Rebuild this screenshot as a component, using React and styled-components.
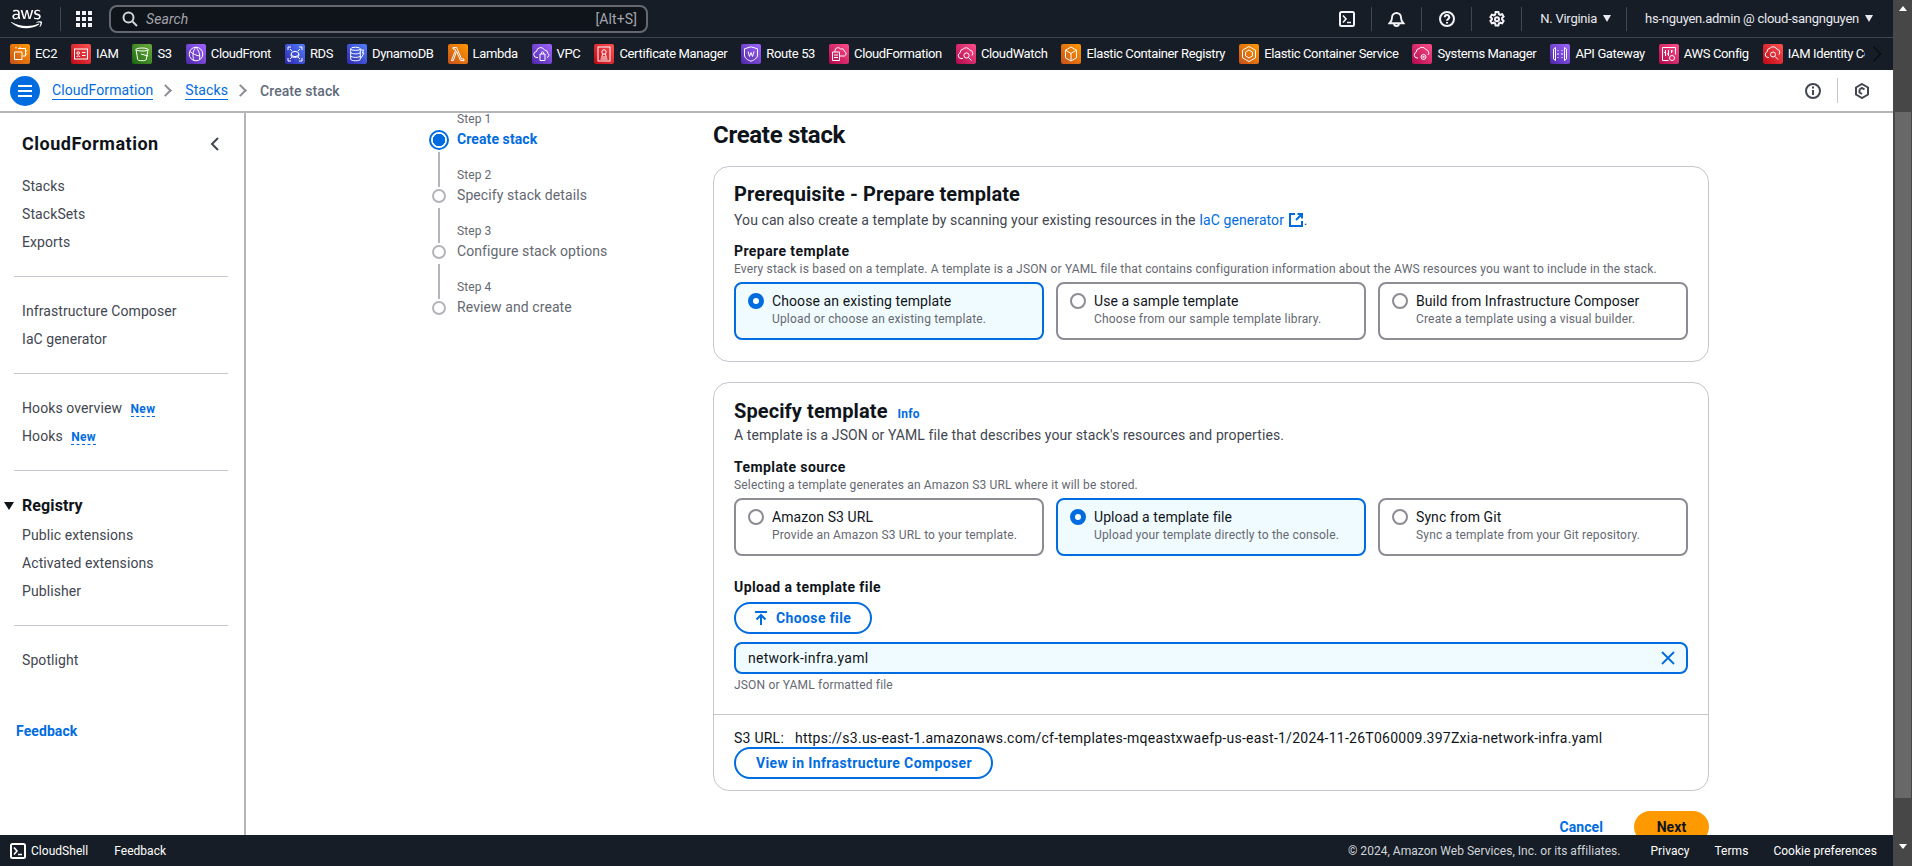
import React from 'react';
import styled, { createGlobalStyle } from 'styled-components';
import { FaAws } from 'react-icons/fa';

const GlobalStyle = createGlobalStyle`
  * { box-sizing: border-box; }
  html, body, #root { margin: 0; padding: 0; height: 100%; overflow: hidden; }
  body {
    font-family: Roboto, "Liberation Sans", Arial, sans-serif;
    font-size: 14px;
    line-height: 20px;
    letter-spacing: 0.09px;
    color: #0f141a;
    background: #fff;
  }
`;

const gradients = {
  orange: 'linear-gradient(45deg, #c8511b, #ff9900)',
  red: 'linear-gradient(45deg, #bd0816, #ff5252)',
  green: 'linear-gradient(45deg, #1b660f, #6cae3e)',
  purple: 'linear-gradient(45deg, #4d27a8, #a166ff)',
  blue: 'linear-gradient(45deg, #2e27ad, #527fff)',
  pink: 'linear-gradient(45deg, #b0084d, #ff4f8b)',
};

const glyphs = {
  ec2: <><path d="M8 4.5h7.5V12H13M4.5 8H12v7.5H4.5z" /><path d="M6 2.8v1.7M10 2.8v1.7M17.2 7h-1.7M17.2 10h-1.7" /></>,
  iam: <><rect x="3.5" y="5" width="13" height="10" /><circle cx="7.2" cy="9" r="1.3" /><path d="M5.5 13c.3-1.5 3.2-1.5 3.5 0M11 8.5h3.5M11 11.5h3.5" /></>,
  s3: <><path d="M4 5.5c0-2 12-2 12 0l-1.7 10c-.4 1.6-8.2 1.6-8.6 0zM4 5.5c0 2 12 2 12 0" /><path d="M9 10l7 2" /></>,
  cloudfront: <><circle cx="10" cy="10" r="6.8" /><path d="M10 3.2C7 6 6 11 8 16.6M10 3.2c2.5 3 4.5 7 3.5 12M4 7.5c3 2.5 6 4 10 4.5" /></>,
  rds: <><ellipse cx="10" cy="10" rx="3.8" ry="2.6" /><path d="M6.2 10v1.8c0 2 7.6 2 7.6 0V10M3 6V3h3M14 3h3v3M17 14v3h-3M6 17H3v-3M5 5l2 2M15 5l-2 2M5 15l2-2M15 15l-2-2" /></>,
  dynamo: <><ellipse cx="8.5" cy="4.8" rx="4.8" ry="1.6" /><path d="M3.7 4.8v10.4c0 2.1 9.6 2.1 9.6 0V4.8M3.7 8.3c0 2.1 9.6 2.1 9.6 0M3.7 11.8c0 2.1 9.6 2.1 9.6 0M14 6h2.6l-1.3 3h1.7l-3 5" /></>,
  lambda: <path d="M5 3.5h3.6l5 11.5h2.4v1.6h-3.4L8.5 7.3 5.3 16.6H3.4l4.2-10.6L6.9 5H5z" />,
  vpc: <><path d="M6 13.5H5a3 3 0 0 1-.5-6 4.2 4.2 0 0 1 8-1.5 3.4 3.4 0 0 1 3.3 3.2 2.4 2.4 0 0 1-.8 4.3" /><path d="M8 10h5v6.5H8zM9.5 10V8.7a1 1 0 0 1 2 0V10" /></>,
  cert: <><rect x="4" y="3" width="12" height="14" /><path d="M6.5 15h7M7 13h6" /><circle cx="10" cy="8" r="2.2" /><path d="M8.8 10l-.8 2.2M11.2 10l.8 2.2" /></>,
  route53: <><path d="M10 2.8l6.5 2v6.2c0 3-3 5-6.5 6.2C6.500 16 3.500 14 3.500 11V4.800z" /><path d="M7 7.500l1.500 5 1.500-4 1.500 4 1.500-5" /></>,
  formation: <><path d="M3.500 8h7v8.500h-7zM5 11h4M5 13.500h4" /><path d="M6 8V6.500a3 3 0 0 1 5.500-1.500 3 3 0 0 1 3.800 2.300 2.500 2.500 0 0 1 .2 4.700H11" /></>,
  watch: <><path d="M7 14.500H5a3 3 0 0 1-.8-5.800 3.600 3.600 0 0 1 3-3.700 4 4 0 0 1 6.500 1 3.400 3.400 0 0 1 2.300 5.500" /><circle cx="10.500" cy="11.500" r="2.600" /><path d="M12.500 13.500l3 3" /></>,
  ecr: <><path d="M10 3l5.500 3.200v7.600L10 17l-5.500-3.200V6.200zM4.500 6.200L10 9.400l5.500-3.200M10 9.400V17" /></>,
  ecs: <><path d="M10 2.500l6.500 3.700v7.600L10 17.500l-6.500-3.700V6.200z" /><path d="M10 6l3.400 2v4L10 14l-3.400-2V8z" /></>,
  systems: <><path d="M6 14H5a3 3 0 0 1-.8-5.800 3.600 3.600 0 0 1 3-3.700 4 4 0 0 1 6.500 1 3.400 3.400 0 0 1 2.300 5.500" /><circle cx="11.500" cy="13" r="2.500" /><circle cx="11.500" cy="13" r="0.800" /></>,
  api: <><path d="M5.500 3.500L3.500 5v10l2 1.500zM14.500 3.500l2 1.500v10l-2 1.500z" /><path d="M8 6v1M8 9v2M8 13v1M12 6v1M12 9v2M12 13v1" /></>,
  config: <><path d="M3.500 3.500h13v7M3.500 3.500v13h6" /><path d="M6.500 6v6M6.500 8.500H5M9.500 6v6M9.500 10H8M12.500 6v3M12.500 7h1.500" /><circle cx="13" cy="14" r="2.500" /></>,
  identity: <><path d="M6 13.500H5a3 3 0 0 1-.8-5.800 3.600 3.600 0 0 1 3-3.700 4 4 0 0 1 6.500 1 3.400 3.400 0 0 1 2.300 5.500" /><circle cx="10" cy="10.500" r="2.500" /><path d="M12 12.500l3 3" /></>,
};

const favorites = [
  ['EC2', 'orange', 'ec2'],
  ['IAM', 'red', 'iam'],
  ['S3', 'green', 's3'],
  ['CloudFront', 'purple', 'cloudfront'],
  ['RDS', 'blue', 'rds'],
  ['DynamoDB', 'blue', 'dynamo'],
  ['Lambda', 'orange', 'lambda'],
  ['VPC', 'purple', 'vpc'],
  ['Certificate Manager', 'red', 'cert'],
  ['Route 53', 'purple', 'route53'],
  ['CloudFormation', 'pink', 'formation'],
  ['CloudWatch', 'pink', 'watch'],
  ['Elastic Container Registry', 'orange', 'ecr'],
  ['Elastic Container Service', 'orange', 'ecs'],
  ['Systems Manager', 'pink', 'systems'],
  ['API Gateway', 'purple', 'api'],
  ['AWS Config', 'pink', 'config'],
  ['IAM Identity Center', 'red', 'identity'],
];

function ServiceIcon({ color, glyph }) {
  return (
    <IconTile $color={color}>
      <svg viewBox="0 0 20 20" width="20" height="20" fill="none" stroke="#fff" strokeWidth="1">
        {glyphs[glyph]}
      </svg>
    </IconTile>
  );
}

function TerminalIcon({ size = 16 }) {
  return (
    <svg viewBox="0 0 16 16" width={size} height={size} fill="none" stroke="currentColor" strokeWidth="2">
      <rect x="1" y="1" width="14" height="14" rx="1.500" />
      <path d="M4 4.500L7 8l-3 3.500M8 11.500h4" strokeWidth="1.600" />
    </svg>
  );
}

function OptionTile({ checked, title, text }) {
  return (
    <Tile $checked={checked}>
      <RadioMark $checked={checked} />
      <div>
        <TileTitle>{title}</TileTitle>
        <TileText>{text}</TileText>
      </div>
    </Tile>
  );
}

const steps = [
  ['Step 1', 'Create stack'],
  ['Step 2', 'Specify stack details'],
  ['Step 3', 'Configure stack options'],
  ['Step 4', 'Review and create'],
];

export default function App() {
  return (
    <>
      <GlobalStyle />
      <Page>
        <Window>
          <TopNav>
            <Logo><FaAws size={38} /></Logo>
            <NavRule />
            <GridDots>
              {Array.from({ length: 9 }).map((_, i) => <i key={i} />)}
            </GridDots>
            <SearchBox>
              <svg viewBox="0 0 16 16" width="16" height="16" fill="none" stroke="#d1d5db" strokeWidth="2">
                <circle cx="6.500" cy="6.500" r="5" />
                <path d="M10.500 10.500L15 15" />
              </svg>
              <SearchText>Search</SearchText>
              <SearchKey>[Alt+S]</SearchKey>
            </SearchBox>
            <NavRight>
              <NavIcon><TerminalIcon /></NavIcon>
              <NavRule />
              <NavIcon>
                <svg viewBox="0 0 16 16" width="17" height="17" fill="none" stroke="currentColor" strokeWidth="1.800">
                  <path d="M1.500 12.500h13c-1.500-1.500-2.300-3-2.300-5.500a4.200 4.200 0 0 0-8.400 0c0 2.500-.8 4-2.300 5.500zM5.800 13c0 2.800 4.400 2.800 4.400 0" />
                </svg>
              </NavIcon>
              <NavRule />
              <NavIcon>
                <svg viewBox="0 0 16 16" width="16" height="16" fill="none" stroke="currentColor" strokeWidth="2">
                  <circle cx="8" cy="8" r="7" />
                  <path d="M5.800 6.200a2.200 2.200 0 1 1 3.300 1.900c-.8.500-1.100.900-1.100 1.700M8 11v1.600" />
                </svg>
              </NavIcon>
              <NavRule />
              <NavIcon>
                <svg viewBox="0 0 16 16" width="16" height="16" fill="none" stroke="currentColor" strokeWidth="2">
                  <path d="M6.600 1h2.800l.5 2.100 1.300.7 2-.7 1.400 2.400-1.500 1.500v1.500l1.500 1.500-1.400 2.400-2-.7-1.300.7-.5 2.100H6.600l-.5-2.100-1.300-.7-2 .7-1.400-2.400 1.500-1.500V7.500L1.400 6l1.400-2.400 2 .7 1.300-.7z" />
                  <circle cx="8" cy="8.200" r="2" />
                </svg>
              </NavIcon>
              <NavRule />
              <NavMenu $left={18} $right={15}>N. Virginia<Caret /></NavMenu>
              <NavRule />
              <NavMenu $left={18} $right={0}>hs-nguyen.admin @ cloud-sangnguyen<Caret /></NavMenu>
            </NavRight>
          </TopNav>

          <FavBar>
            <FavList>
              {favorites.map(([name, color, glyph]) => (
                <FavItem key={name}>
                  <ServiceIcon color={color} glyph={glyph} />
                  {name}
                </FavItem>
              ))}
            </FavList>
            <FavMore>
              <svg viewBox="0 0 10 18" width="10" height="18" fill="none" stroke="#0a0e13" strokeWidth="1.500">
                <path d="M1.500 1.500L8.500 9l-7 7.500" />
              </svg>
            </FavMore>
          </FavBar>

          <CrumbBar>
            <MenuButton>
              <svg viewBox="0 0 16 16" width="16" height="16" stroke="#fff" strokeWidth="2">
                <path d="M1 3h14M1 8h14M1 13h14" />
              </svg>
            </MenuButton>
            <CrumbLink $first>CloudFormation</CrumbLink>
            <CrumbChevron />
            <CrumbLink>Stacks</CrumbLink>
            <CrumbChevron />
            <CrumbCurrent>Create stack</CrumbCurrent>
            <CrumbTools>
              <svg viewBox="0 0 16 16" width="16" height="16" fill="none" stroke="#424650" strokeWidth="2">
                <circle cx="8" cy="8" r="7" />
                <path d="M8 7v5M8 3.600v1.800" />
              </svg>
              <ToolRule />
              <svg viewBox="0 0 16 16" width="16" height="16" fill="none" stroke="#424650" strokeWidth="2">
                <path d="M8 1l6 3.500v7L8 15l-6-3.500v-7z" />
                <path d="M5.500 6.500L8 5l2.500 1.500M5.500 6.500v3L8 11" />
              </svg>
            </CrumbTools>
          </CrumbBar>

          <Body>
            <Sidebar>
              <SideHeader>
                <SideTitle>CloudFormation</SideTitle>
                <svg viewBox="0 0 10 16" width="10" height="16" fill="none" stroke="#424650" strokeWidth="2">
                  <path d="M8 2L2 8l6 6" />
                </svg>
              </SideHeader>
              <SideItem>Stacks</SideItem>
              <SideItem>StackSets</SideItem>
              <SideItem>Exports</SideItem>
              <SideRule />
              <SideItem>Infrastructure Composer</SideItem>
              <SideItem>IaC generator</SideItem>
              <SideRule />
              <SideItem>Hooks overview <NewTag>New</NewTag></SideItem>
              <SideItem>Hooks <NewTag>New</NewTag></SideItem>
              <SideRule />
              <SideGroup>
                <GroupCaret />
                Registry
              </SideGroup>
              <SideItem>Public extensions</SideItem>
              <SideItem>Activated extensions</SideItem>
              <SideItem>Publisher</SideItem>
              <SideRule />
              <SideItem>Spotlight</SideItem>
              <SideFeedback>Feedback</SideFeedback>
            </Sidebar>

            <Content>
              <Steps>
                {steps.map(([label, title], i) => (
                  <Step key={label} $first={i === 0}>
                    <StepMark><StepDot $active={i === 0} /></StepMark>
                    <div>
                      <StepLabel>{label}</StepLabel>
                      <StepTitle $active={i === 0}>{title}</StepTitle>
                    </div>
                  </Step>
                ))}
              </Steps>

              <Main>
                <PageTitle>Create stack</PageTitle>

                <Card>
                  <CardBody>
                    <CardTitle>Prerequisite - Prepare template</CardTitle>
                    <CardText>
                      You can also create a template by scanning your existing resources in the{' '}
                      <InlineLink>IaC generator</InlineLink>{' '}
                      <ExternalIcon viewBox="0 0 16 16" width="16" height="16" fill="none" stroke="#006ce0" strokeWidth="2">
                        <path d="M7 2H2v12h12V9M9.500 2H14v4.500M14 2L8 8" />
                      </ExternalIcon>.
                    </CardText>
                    <FieldLabel $top={11}>Prepare template</FieldLabel>
                    <FieldHint>Every stack is based on a template. A template is a JSON or YAML file that contains configuration information about the AWS resources you want to include in the stack.</FieldHint>
                    <TileRow>
                      <OptionTile checked title="Choose an existing template" text="Upload or choose an existing template." />
                      <OptionTile title="Use a sample template" text="Choose from our sample template library." />
                      <OptionTile title="Build from Infrastructure Composer" text="Create a template using a visual builder." />
                    </TileRow>
                  </CardBody>
                </Card>

                <Card>
                  <CardBody $tight>
                    <CardTitle $row>Specify template <InfoLink>Info</InfoLink></CardTitle>
                    <CardText $gap={2}>A template is a JSON or YAML file that describes your stack's resources and properties.</CardText>
                    <FieldLabel $top={12}>Template source</FieldLabel>
                    <FieldHint>Selecting a template generates an Amazon S3 URL where it will be stored.</FieldHint>
                    <TileRow>
                      <OptionTile title="Amazon S3 URL" text="Provide an Amazon S3 URL to your template." />
                      <OptionTile checked title="Upload a template file" text="Upload your template directly to the console." />
                      <OptionTile title="Sync from Git" text="Sync a template from your Git repository." />
                    </TileRow>
                    <FieldLabel $top={21}>Upload a template file</FieldLabel>
                    <PillButton $top={5} $left={17}>
                      <svg viewBox="0 0 16 16" width="16" height="16" fill="none" stroke="#006ce0" strokeWidth="2">
                        <path d="M2 2h12M8 15V5M3.500 9.500L8 5l4.500 4.500" />
                      </svg>
                      Choose file
                    </PillButton>
                    <FileInput>
                      network-infra.yaml
                      <svg viewBox="0 0 16 16" width="16" height="16" fill="none" stroke="#006ce0" strokeWidth="1.800">
                        <path d="M2 2l12 12M14 2L2 14" />
                      </svg>
                    </FileInput>
                    <Constraint>JSON or YAML formatted file</Constraint>
                  </CardBody>
                  <CardFooter>
                    <UrlLine><UrlName>S3 URL:</UrlName>https://s3.us-east-1.amazonaws.com/cf-templates-mqeastxwaefp-us-east-1/2024-11-26T060009.397Zxia-network-infra.yaml</UrlLine>
                    <PillButton $left={20}>View in Infrastructure Composer</PillButton>
                  </CardFooter>
                </Card>

                <Actions>
                  <CancelLink>Cancel</CancelLink>
                  <NextButton>Next</NextButton>
                </Actions>
              </Main>
            </Content>
          </Body>

          <Footer>
            <FootLeft>
              <TerminalIcon />
              <span>CloudShell</span>
              <FootFeedback>Feedback</FootFeedback>
            </FootLeft>
            <FootRight>
              <Copyright>© 2024, Amazon Web Services, Inc. or its affiliates.</Copyright>
              <span>Privacy</span>
              <span>Terms</span>
              <span>Cookie preferences</span>
            </FootRight>
          </Footer>
        </Window>

        <ScrollTrack>
          <ScrollArrow />
          <ScrollThumb />
          <ScrollArrow $down />
        </ScrollTrack>
      </Page>
    </>
  );
}

const Page = styled.div`
  display: flex;
  width: 100%;
  height: 100%;
  overflow: hidden;
`;
const Window = styled.div`
  flex: 1;
  min-width: 0;
  display: flex;
  flex-direction: column;
`;

/* top navigation */
const TopNav = styled.header`
  height: 38px;
  flex: none;
  display: flex;
  align-items: center;
  padding: 0 20px 0 11px;
  background: #161d26;
  border-bottom: 1px solid #3f4650;
  color: #fff;
`;
const Logo = styled.div`
  width: 31px;
  height: 34px;
  display: flex;
  align-items: center;
  justify-content: center;
  margin-right: 18px;
  color: #fff;
`;
const NavRule = styled.span`
  width: 1px;
  height: 24px;
  background: #424650;
  flex: none;
`;
const GridDots = styled.div`
  display: grid;
  grid-template-columns: repeat(3, 4px);
  grid-auto-rows: 4px;
  gap: 2px;
  margin: 0 17px 0 15px;
  i { background: #f3f3f7; display: block; }
`;
const SearchBox = styled.div`
  width: 539px;
  height: 28px;
  display: flex;
  align-items: center;
  padding: 0 9px 0 11px;
  background: #0f141a;
  border: 2px solid #656871;
  border-radius: 8px;
`;
const SearchText = styled.span`
  margin-left: 8px;
  flex: 1;
  font-style: italic;
  color: #a4a4ad;
`;
const SearchKey = styled.span`
  color: #a4a4ad;
`;
const NavRight = styled.div`
  margin-left: auto;
  display: flex;
  align-items: center;
`;
const NavIcon = styled.span`
  width: 49px;
  display: flex;
  justify-content: center;
  color: #f3f3f7;
`;
const NavMenu = styled.span`
  display: flex;
  align-items: center;
  font-size: 13px;
  letter-spacing: -0.25px;
  color: #e8e8ee;
  padding: 0 ${(p) => p.$right}px 0 ${(p) => p.$left}px;
`;
const Caret = styled.i`
  width: 0;
  height: 0;
  margin-left: 6px;
  border-left: 4.500px solid transparent;
  border-right: 4.500px solid transparent;
  border-top: 7px solid #e8e8ee;
`;

/* favorites bar */
const FavBar = styled.nav`
  height: 32px;
  flex: none;
  display: flex;
  align-items: center;
  padding-left: 10px;
  background: #161d26;
`;
const FavList = styled.div`
  flex: none;
  width: 1855px;
  display: flex;
  gap: 14px;
  overflow: hidden;
`;
const FavItem = styled.span`
  flex: none;
  display: flex;
  align-items: center;
  gap: 5px;
  font-size: 13px;
  letter-spacing: -0.36px;
  color: #fff;
  white-space: nowrap;
`;
const IconTile = styled.span`
  width: 20px;
  height: 20px;
  flex: none;
  border-radius: 2px;
  background: ${(p) => gradients[p.$color]};
  svg { display: block; }
`;
const FavMore = styled.span`
  margin-left: 7px;
  display: flex;
`;

/* breadcrumbs */
const CrumbBar = styled.div`
  height: 43px;
  flex: none;
  display: flex;
  align-items: center;
  padding: 0 23px 0 10px;
  background: #fff;
  border-bottom: 2px solid #b4b4bb;
`;
const MenuButton = styled.span`
  width: 30px;
  height: 30px;
  border-radius: 50%;
  background: #006ce0;
  display: flex;
  align-items: center;
  justify-content: center;
`;
const CrumbLink = styled.span`
  color: #006ce0;
  border-bottom: 1px solid #006ce0;
  line-height: 18px;
  margin-left: ${(p) => (p.$first ? '12px' : '0')};
`;
const CrumbChevron = styled.i`
  width: 9px;
  height: 9px;
  margin: 0 15px 0 8px;
  border-top: 2px solid #8c8c94;
  border-right: 2px solid #8c8c94;
  transform: rotate(45deg);
`;
const CrumbCurrent = styled.span`
  color: #5f6b7a;
  font-weight: 500;
`;
const CrumbTools = styled.div`
  margin-left: auto;
  display: flex;
  align-items: center;
  gap: 16px;
`;
const ToolRule = styled.span`
  width: 1px;
  height: 25px;
  background: #c6c6cd;
`;

/* body */
const Body = styled.div`
  flex: 1;
  min-height: 0;
  display: flex;
  overflow: hidden;
`;
const Sidebar = styled.aside`
  width: 246px;
  flex: none;
  border-right: 2px solid #b4b4bb;
`;
const SideHeader = styled.div`
  display: flex;
  align-items: center;
  justify-content: space-between;
  margin-top: 17px;
  margin-bottom: 14px;
  padding: 0 24px 0 22px;
  height: 28px;
`;
const SideTitle = styled.h2`
  margin: 0;
  font-size: 18px;
  font-weight: 700;
  letter-spacing: 0.5px;
  color: #0f141a;
`;
const SideItem = styled.div`
  height: 28px;
  line-height: 28px;
  padding-left: 22px;
  color: #424650;
`;
const NewTag = styled.span`
  margin-left: 5px;
  color: #006ce0;
  font-size: 12px;
  font-weight: 700;
  letter-spacing: 0.3px;
  border-bottom: 1px dashed #006ce0;
`;
const SideRule = styled.hr`
  margin: 20px 16px 20px 14px;
  border: 0;
  border-top: 1px solid #c6c6cd;
`;
const SideGroup = styled.div`
  position: relative;
  height: 28px;
  line-height: 28px;
  margin-top: 21px;
  margin-bottom: 1px;
  padding-left: 22px;
  font-size: 16px;
  font-weight: 700;
  color: #0f141a;
`;
const GroupCaret = styled.i`
  position: absolute;
  left: 4px;
  top: 10px;
  border-left: 5px solid transparent;
  border-right: 5px solid transparent;
  border-top: 8px solid #0f141a;
`;
const SideFeedback = styled.div`
  margin-top: 47px;
  padding-left: 16px;
  font-weight: 700;
  color: #006ce0;
`;

/* content */
const Content = styled.div`
  flex: 1;
  min-width: 0;
  display: flex;
  padding-left: 183px;
`;
const Steps = styled.ol`
  list-style: none;
  width: 284px;
  flex: none;
  margin: -2px 0 0;
  padding: 0;
`;
const Step = styled.li`
  position: relative;
  height: 56px;
  display: flex;
  gap: 8px;
  ${(p) => !p.$first && `
    &::before {
      content: '';
      position: absolute;
      left: 9px;
      top: -15px;
      width: 2px;
      height: 35px;
      background: #b4b4bb;
    }
  `}
`;
const StepMark = styled.div`
  width: 20px;
  height: 58px;
  display: flex;
  align-items: center;
  justify-content: center;
`;
const StepDot = styled.span`
  display: block;
  border-radius: 50%;
  ${(p) => (p.$active
    ? 'width: 20px; height: 20px; border: 2px solid #006ce0; background: radial-gradient(circle, #006ce0 0 6px, #fff 6.500px);'
    : 'width: 14px; height: 14px; border: 2px solid #b4b4bb;')}
`;
const StepLabel = styled.div`
  font-size: 12px;
  line-height: 16px;
  margin-bottom: 2px;
  color: #656871;
`;
const StepTitle = styled.div`
  color: ${(p) => (p.$active ? '#006ce0' : '#656871')};
  font-weight: ${(p) => (p.$active ? 700 : 400)};
`;
const Main = styled.main`
  width: 996px;
  flex: none;
`;
const PageTitle = styled.h1`
  margin: 7px 0 16px;
  font-size: 24px;
  line-height: 30px;
  font-weight: 700;
  letter-spacing: -0.3px;
  color: #0f141a;
`;
const Card = styled.section`
  margin-bottom: 20px;
  border: 1px solid #c6c6cd;
  border-radius: 16px;
  background: #fff;
`;
const CardBody = styled.div`
  padding: ${(p) => (p.$tight ? '16px 20px 21px' : '15px 20px 21px')};
`;
const CardTitle = styled.h2`
  margin: 0;
  font-size: 20px;
  line-height: 24px;
  font-weight: 700;
  letter-spacing: 0.1px;
  color: #0f141a;
  ${(p) => p.$row && 'display: flex; align-items: baseline; gap: 10px;'}
`;
const CardText = styled.p`
  margin: ${(p) => p.$gap ?? 4}px 0 0;
  color: #424650;
  white-space: nowrap;
`;
const InlineLink = styled.span`
  color: #006ce0;
`;
const InfoLink = styled.span`
  font-size: 12px;
  line-height: 12px;
  font-weight: 700;
  letter-spacing: 0.2px;
  color: #006ce0;
`;
const ExternalIcon = styled.svg`
  vertical-align: -3px;
`;
const FieldLabel = styled.div`
  margin-top: ${(p) => p.$top}px;
  font-weight: 700;
  letter-spacing: 0.42px;
  color: #0f141a;
`;
const FieldHint = styled.div`
  font-size: 12px;
  line-height: 16px;
  letter-spacing: 0.17px;
  color: #656871;
`;
const TileRow = styled.div`
  display: grid;
  grid-template-columns: repeat(3, 1fr);
  gap: 12px;
  margin-top: 5px;
`;
const Tile = styled.div`
  height: 58px;
  display: flex;
  gap: 8px;
  padding: 7px 12px;
  border: 2px solid ${(p) => (p.$checked ? '#006ce0' : '#8c8c94')};
  border-radius: 8px;
  background: ${(p) => (p.$checked ? '#f0fbff' : '#fff')};
`;
const RadioMark = styled.span`
  width: 16px;
  height: 16px;
  flex: none;
  margin-top: 2px;
  border-radius: 50%;
  background: #fff;
  border: ${(p) => (p.$checked ? '5px solid #006ce0' : '2px solid #8c8c94')};
`;
const TileTitle = styled.div`
  color: #0f141a;
`;
const TileText = styled.div`
  font-size: 12px;
  line-height: 16px;
  letter-spacing: 0.17px;
  color: #656871;
`;
const PillButton = styled.div`
  width: fit-content;
  height: 32px;
  margin-top: ${(p) => p.$top ?? 0}px;
  padding: 0 19px 0 ${(p) => p.$left}px;
  display: flex;
  align-items: center;
  gap: 7px;
  border: 2px solid #006ce0;
  border-radius: 20px;
  font-weight: 700;
  letter-spacing: 0.38px;
  color: #006ce0;
  background: #fff;
`;
const FileInput = styled.div`
  height: 32px;
  margin-top: 8px;
  padding: 0 10px 0 12px;
  display: flex;
  align-items: center;
  justify-content: space-between;
  border: 2px solid #006ce0;
  border-radius: 8px;
  background: #f0fbff;
  letter-spacing: 0.27px;
  color: #0f141a;
`;
const Constraint = styled.div`
  margin-top: 3px;
  font-size: 12px;
  line-height: 16px;
  letter-spacing: 0.17px;
  color: #656871;
`;
const CardFooter = styled.div`
  padding: 14px 20px 11px;
  border-top: 1px solid #c6c6cd;
`;
const UrlLine = styled.div`
  line-height: 18px;
  letter-spacing: 0.25px;
  color: #0f141a;
  white-space: nowrap;
`;
const UrlName = styled.span`
  display: inline-block;
  width: 61px;
`;
const Actions = styled.div`
  display: flex;
  justify-content: flex-end;
  align-items: center;
  gap: 31px;
`;
const CancelLink = styled.span`
  font-weight: 700;
  color: #006ce0;
`;
const NextButton = styled.span`
  width: 75px;
  height: 32px;
  display: flex;
  align-items: center;
  justify-content: center;
  border-radius: 20px;
  background: #ff9900;
  font-weight: 700;
  color: #0f141a;
`;

/* footer */
const Footer = styled.footer`
  height: 31px;
  flex: none;
  display: flex;
  align-items: center;
  justify-content: space-between;
  padding: 0 16px 0 10px;
  background: #161d26;
  color: #fff;
  font-size: 12px;
  letter-spacing: 0.03px;
`;
const FootLeft = styled.div`
  display: flex;
  align-items: center;
  gap: 5px;
`;
const FootFeedback = styled.span`
  margin-left: 21px;
`;
const FootRight = styled.div`
  display: flex;
  align-items: center;
  gap: 25px;
`;
const Copyright = styled.span`
  color: #d1d5db;
  margin-right: 5px;
`;

/* scrollbar */
const ScrollTrack = styled.div`
  width: 19px;
  flex: none;
  display: flex;
  flex-direction: column;
  align-items: center;
  background: #474747;
`;
const ScrollArrow = styled.i`
  flex: none;
  width: 0;
  height: 0;
  margin: ${(p) => (p.$down ? '46px 0 5px' : '6px 0 101px')};
  border-left: 4.500px solid transparent;
  border-right: 4.500px solid transparent;
  ${(p) => (p.$down ? 'border-top: 5px solid #fff;' : 'border-bottom: 5px solid #fff;')}
`;
const ScrollThumb = styled.div`
  width: 16px;
  height: 686px;
  flex: none;
  background: #686868;
`;
